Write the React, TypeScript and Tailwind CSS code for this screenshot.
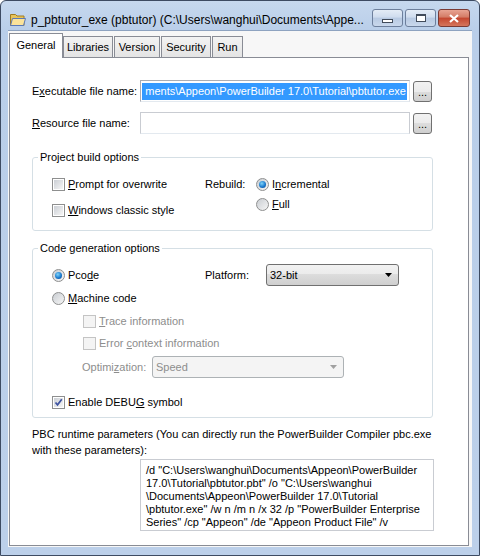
import type { ReactNode } from "react";

const ui = "font-['Liberation_Sans',Arial,sans-serif] text-[11px] leading-[13px]";

function Checkbox({ checked = false, disabled = false }: { checked?: boolean; disabled?: boolean }) {
  return (
    <span
      className={`inline-flex h-[13px] w-[13px] shrink-0 items-center justify-center border ${
        disabled ? "border-[#c4c4c4] bg-[#f4f4f4]" : "border-[#8e8f8f] bg-white"
      }`}
    >
      <span
        className={`relative block h-[9px] w-[9px] ${
          disabled ? "bg-[#f4f4f4]" : "bg-[linear-gradient(135deg,#cbcfd5,#f6f6f6)]"
        }`}
      >
        {checked && (
          <svg viewBox="0 0 9 9" className="absolute inset-0 h-[9px] w-[9px]">
            <path d="M1.5 4.5 L3.5 6.8 L7.8 1.3" fill="none" stroke="#3e53a1" strokeWidth="1.7" />
          </svg>
        )}
      </span>
    </span>
  );
}

function Radio({ checked = false }: { checked?: boolean }) {
  return (
    <span className="inline-flex h-[13px] w-[13px] shrink-0 items-center justify-center rounded-full border border-[#8e8f8f] bg-[linear-gradient(135deg,#c9cdd2,#f6f6f6)]">
      {checked && (
        <span className="block h-[7px] w-[7px] rounded-full bg-[radial-gradient(circle_at_40%_35%,#7fd3f8,#1b7bcf_55%,#0b3f86)]" />
      )}
    </span>
  );
}

function Option({ box, children, disabled = false }: { box: ReactNode; children: ReactNode; disabled?: boolean }) {
  return (
    <div className={`flex h-[16px] items-center gap-[3px] ${disabled ? "text-[#8d8d8d]" : "text-black"}`}>
      {box}
      <span>{children}</span>
    </div>
  );
}

function U({ children }: { children: ReactNode }) {
  return <span className="underline underline-offset-[1px]">{children}</span>;
}

function DotsButton() {
  return (
    <div className="flex h-[21px] w-[19px] items-end justify-center rounded-[3px] border border-[#707070] bg-[linear-gradient(#f2f2f2_0%,#ebebeb_50%,#dddddd_50%,#cfcfcf_100%)] pb-[5px] text-[11px] leading-[8px]">
      ...
    </div>
  );
}

function Combo({ value, width, disabled = false }: { value: string; width: string; disabled?: boolean }) {
  return (
    <div
      className={`flex h-[22px] items-center justify-between rounded-[3px] border pl-[3px] pr-[6px] ${width} ${
        disabled
          ? "border-[#adb2b5] bg-[#f4f4f4] text-[#8d8d8d]"
          : "border-[#707070] bg-[linear-gradient(#f2f2f2_0%,#ebebeb_45%,#dddddd_45%,#cfcfcf_100%)] text-black"
      }`}
    >
      <span>{value}</span>
      <svg viewBox="0 0 7 4" className="h-[4px] w-[7px]">
        <path d="M0 0 H7 L3.5 4 Z" fill={disabled ? "#a0a0a0" : "#000"} />
      </svg>
    </div>
  );
}

function Tab({ label, active = false, width }: { label: string; active?: boolean; width: string }) {
  return active ? (
    <div className={`relative z-10 -mb-px flex h-[25px] items-start justify-center border border-b-0 border-[#898c95] bg-white pt-[5px] ${width}`}>
      {label}
    </div>
  ) : (
    <div className={`flex h-[21px] items-center justify-center border border-b-0 border-[#898c95] bg-[linear-gradient(#f3f3f3,#e4e4e4)] ${width}`}>
      {label}
    </div>
  );
}

function Folder() {
  return (
    <svg viewBox="0 0 16 13" className="h-[13px] w-[16px]">
      <path d="M0.5 1.5 h5 l1.5 1.5 h7 v9.5 h-13.5 Z" fill="#e7c35a" stroke="#a07c22" />
      <path d="M2.5 5.5 h13 l-2 7 h-13 Z" fill="#fbe39a" stroke="#5a79b8" />
    </svg>
  );
}

function CaptionButton({ kind }: { kind: "min" | "max" | "close" }) {
  if (kind === "close") {
    return (
      <div className="flex h-[18px] w-[32px] items-center justify-center rounded-[3px] border border-[#7a3a34] bg-[linear-gradient(#e8a493,#d37b65_45%,#c4462f_50%,#d5765d)]">
        <svg viewBox="0 0 10 9" className="h-[9px] w-[10px]">
          <path d="M1 1 L9 8 M9 1 L1 8" stroke="#fff" strokeWidth="2.2" />
        </svg>
      </div>
    );
  }
  return (
    <div className="flex h-[18px] w-[31px] items-center justify-center rounded-[3px] border border-[#6d7f9c] bg-[linear-gradient(#e4ecf6,#cfdcee_45%,#b7c9e2_50%,#c9d8ec)]">
      {kind === "min" ? (
        <span className="mt-[5px] block h-[4px] w-[11px] border border-[#414b5a] bg-white" />
      ) : (
        <span className="block h-[8px] w-[10px] border border-[#414b5a] border-t-2 bg-white" />
      )}
    </div>
  );
}

export default function App() {
  return (
    <div className={`${ui} h-[556px] w-[480px] overflow-hidden rounded-t-[6px] border border-[#3d4b62] bg-[linear-gradient(#c6d8ee,#b9cee9_30px,#bcd0ea)] flex flex-col`}>
      {/* caption */}
      <div className="flex h-[29px] shrink-0 items-start pl-[9px] pr-[9px] pt-[8px]">
        <div className="mt-[4px]">
          <Folder />
        </div>
        <span className="ml-[5px] mt-[4px] whitespace-nowrap text-[12px] leading-[14px] text-black">
          {"p_pbtutor_exe (pbtutor) (C:\\Users\\wanghui\\Documents\\Appe..."}
        </span>
        <div className="ml-auto flex gap-[2px]">
          <CaptionButton kind="min" />
          <CaptionButton kind="max" />
          <CaptionButton kind="close" />
        </div>
      </div>

      {/* client area */}
      <div className="mx-[7px] flex-1 border-t border-[#8ea3c0] bg-[#f7f7f7] pl-px">
        <div className="flex h-[26px] items-end">
          <Tab label="General" active width="w-[54px]" />
          <Tab label="Libraries" width="w-[50px]" />
          <Tab label="Version" width="ml-px w-[46px]" />
          <Tab label="Security" width="ml-px w-[50px]" />
          <Tab label="Run" width="ml-px w-[31px]" />
        </div>

        <div className="flex h-[489px] w-[460px] flex-col border border-[#898c95] bg-white pl-[22px]">
          <div className="mt-[22px] flex items-center">
            <span className="w-[108px]">
              E<U>x</U>ecutable file name:
            </span>
            {/* field is scrolled to the end of the path, so only the tail shows */}
            <div className="flex h-[22px] w-[270px] items-center justify-end overflow-hidden border border-[#abadb3] border-b-[#e3e9ef] border-r-[#dbdfe6] px-[2px]">
              <span className="whitespace-nowrap bg-[#3399ff] py-[2px] pl-[3px] pr-px text-white">
                {"ments\\Appeon\\PowerBuilder 17.0\\Tutorial\\pbtutor.exe"}
              </span>
            </div>
            <div className="ml-[3px]">
              <DotsButton />
            </div>
          </div>

          <div className="mt-[10px] flex items-center">
            <span className="w-[108px]">
              <U>R</U>esource file name:
            </span>
            <div className="h-[22px] w-[270px] border border-[#c9ccd2] border-b-[#e3e9ef]" />
            <div className="ml-[3px]">
              <DotsButton />
            </div>
          </div>

          <fieldset className="mt-[16px] w-[401px] rounded-[3px] border border-[#d5dfe5] pb-[12px] pl-[19px] pt-[12px]">
            <legend className="-ml-[14px] px-[2px] leading-[14px]">Project build options</legend>
            <div className="flex">
              <div className="flex w-[153px] flex-col gap-[10px]">
                <Option box={<Checkbox />}>
                  <U>P</U>rompt for overwrite
                </Option>
                <Option box={<Checkbox />}>
                  <U>W</U>indows classic style
                </Option>
              </div>
              <div className="flex h-[16px] w-[51px] items-center">Rebuild:</div>
              <div className="flex flex-col gap-[4px]">
                <Option box={<Radio checked />}>
                  I<U>n</U>cremental
                </Option>
                <Option box={<Radio />}>
                  <U>F</U>ull
                </Option>
              </div>
            </div>
          </fieldset>

          <fieldset className="mt-[10px] w-[401px] rounded-[3px] border border-[#d5dfe5] pb-[7px] pl-[19px] pt-[9px]">
            <legend className="-ml-[14px] px-[2px] leading-[14px]">Code generation options</legend>
            <div className="flex h-[22px] items-center">
              <div className="w-[153px]">
                <Option box={<Radio checked />}>
                  Pco<U>d</U>e
                </Option>
              </div>
              <span className="w-[61px]">Platform:</span>
              <Combo value="32-bit" width="w-[133px]" />
            </div>
            <div className="mt-[4px]">
              <Option box={<Radio />}>
                <U>M</U>achine code
              </Option>
            </div>
            <div className="mt-[7px] pl-[31px]">
              <Option box={<Checkbox disabled />} disabled>
                <U>T</U>race information
              </Option>
            </div>
            <div className="mt-[6px] pl-[31px]">
              <Option box={<Checkbox disabled />} disabled>
                Error <U>c</U>ontext information
              </Option>
            </div>
            <div className="mt-[5px] flex items-center pl-[30px] text-[#8d8d8d]">
              <span className="w-[70px]">
                Optimi<U>z</U>ation:
              </span>
              <Combo value="Speed" width="w-[192px]" disabled />
            </div>
            <div className="mt-[16px]">
              <Option box={<Checkbox checked />}>
                Enable DEBU<U>G</U> symbol
              </Option>
            </div>
          </fieldset>

          <p className="mt-[8px] leading-[16px]">
            PBC runtime parameters (You can directly run the PowerBuilder Compiler pbc.exe
            <br />
            with these parameters):
          </p>

          <div className="ml-[108px] mt-px h-[72px] w-[294px] border border-[#c9ccd2] px-[5px] pt-[4px]">
            <div>{"/d \"C:\\Users\\wanghui\\Documents\\Appeon\\PowerBuilder"}</div>
            <div>{"17.0\\Tutorial\\pbtutor.pbt\" /o \"C:\\Users\\wanghui"}</div>
            <div>{"\\Documents\\Appeon\\PowerBuilder 17.0\\Tutorial"}</div>
            <div>{"\\pbtutor.exe\" /w n /m n /x 32 /p \"PowerBuilder Enterprise"}</div>
            <div>{"Series\" /cp \"Appeon\" /de \"Appeon Product File\" /v"}</div>
          </div>
        </div>
      </div>

      <div className="h-[8px] shrink-0" />
    </div>
  );
}
